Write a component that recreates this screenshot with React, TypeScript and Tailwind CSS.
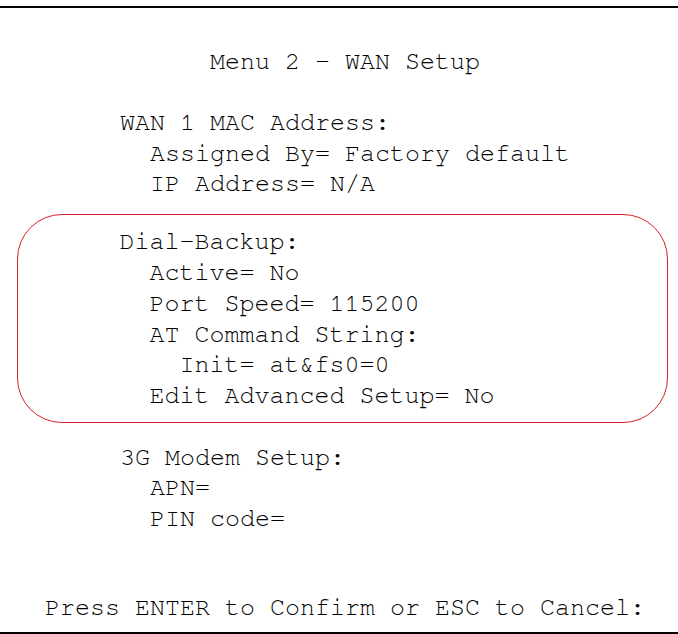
const MONO = "font-['Nimbus_Mono_PS','FreeMono','Courier_New','Liberation_Mono',monospace]";

function Line({ text }: { text: string }) {
  return <div className="h-[30.8px] whitespace-pre">{text}</div>;
}

export default function App() {
  return (
    <div className={`h-[634px] w-[678px] bg-white pt-[6px] text-[25px] leading-[30.8px] text-black ${MONO}`}>
      <div className="flex h-[628px] flex-col border-y-2 border-black pt-[39px]">
        {/* title */}
        <div className="pl-[45px]">
          <Line text="           Menu 2 - WAN Setup" />
        </div>

        {/* WAN MAC */}
        <div className="mt-[30px] pl-[45px]">
          <Line text="     WAN 1 MAC Address:" />
          <Line text="       Assigned By= Factory default" />
          <Line text="       IP Address= N/A" />
        </div>

        {/* dial backup, circled */}
        <div className="mt-[13.6px] ml-[17px] mr-[10px] rounded-[45px] border-[1.6px] border-[#d91f2b] pt-[12.4px] pb-[9.6px] pl-[26.4px]">
          <Line text="     Dial-Backup:" />
          <Line text="       Active= No" />
          <Line text="       Port Speed= 115200" />
          <Line text="       AT Command String:" />
          <Line text="         Init= at&fs0=0" />
          <Line text="       Edit Advanced Setup= No" />
        </div>

        {/* 3G */}
        <div className="mt-[20px] pl-[45px]">
          <Line text="     3G Modem Setup:" />
          <Line text="       APN=" />
          <Line text="       PIN code=" />
        </div>

        <div className="mt-[57.6px] pl-[45px]">
          <Line text="Press ENTER to Confirm or ESC to Cancel:" />
        </div>
      </div>
    </div>
  );
}
